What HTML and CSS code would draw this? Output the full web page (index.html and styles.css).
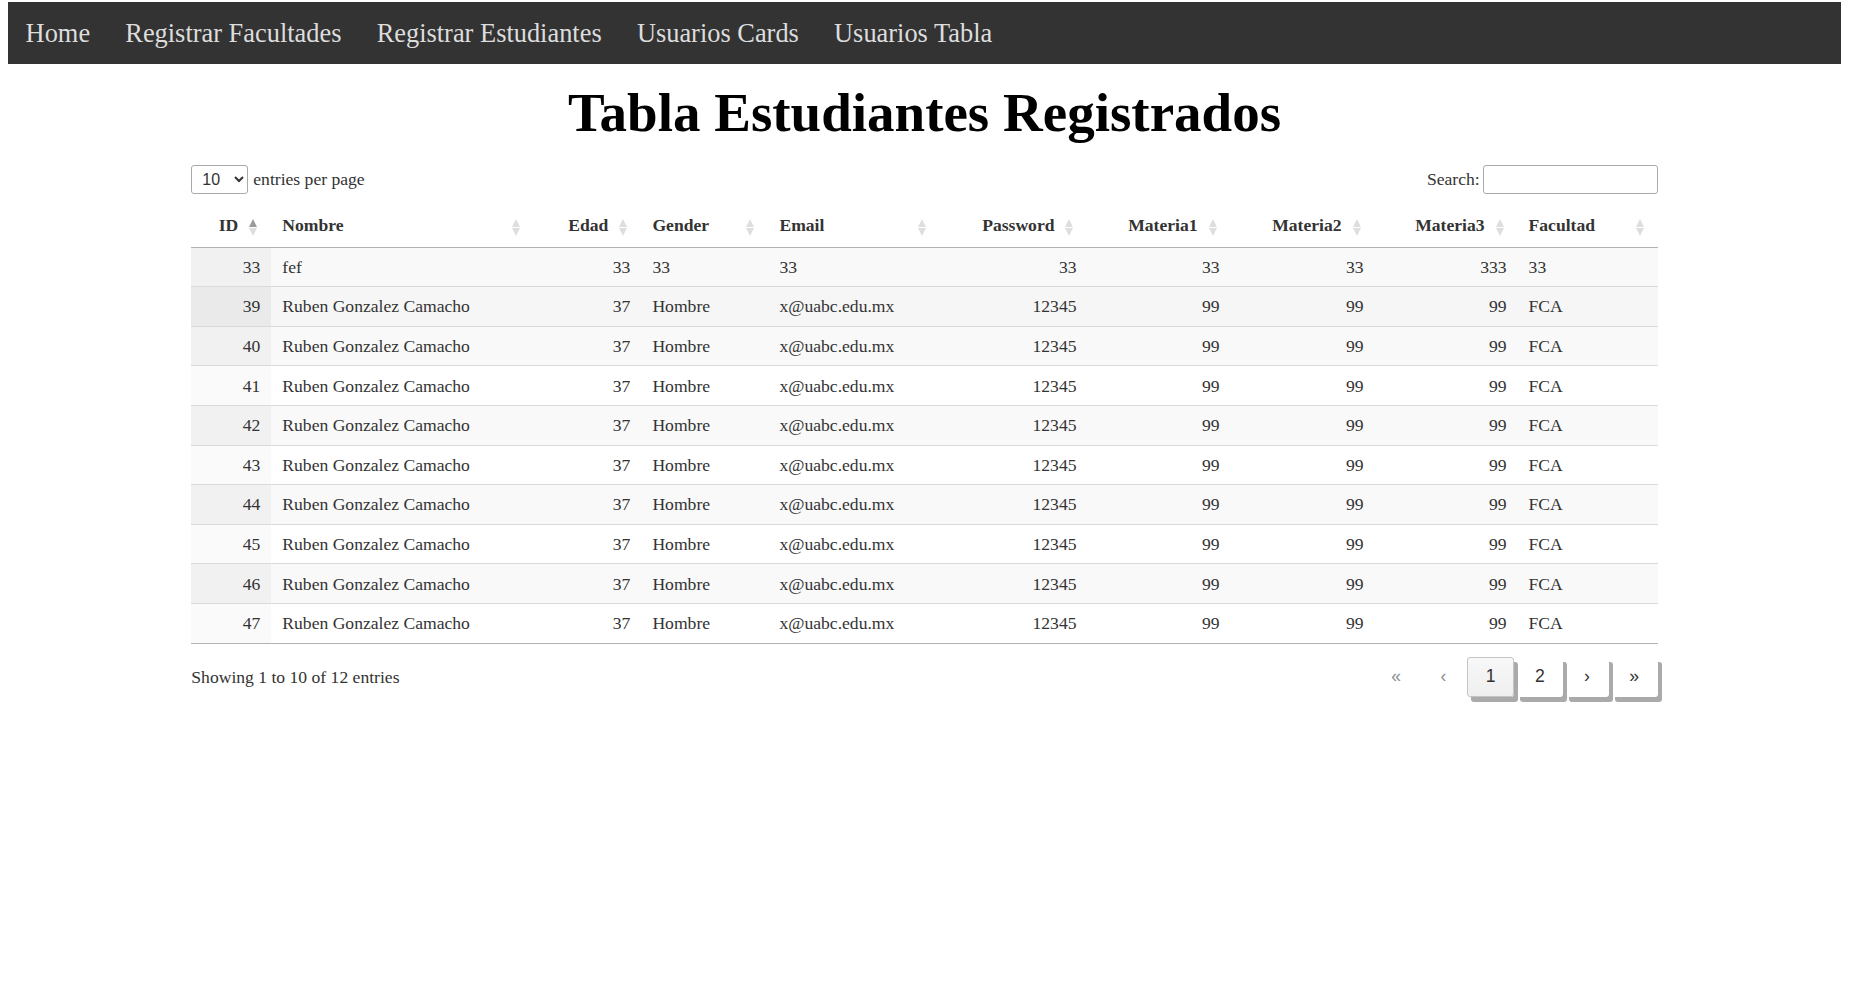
FILE: index.html
```html
<!DOCTYPE html>
<html lang="es">
<head>
<meta charset="utf-8">
<title>Tabla Estudiantes Registrados</title>
<link rel="stylesheet" href="styles.css">
</head>
<body>
<nav class="topnav">
  <a href="#">Home</a>
  <a href="#">Registrar Facultades</a>
  <a href="#">Registrar Estudiantes</a>
  <a href="#">Usuarios Cards</a>
  <a href="#">Usuarios Tabla</a>
</nav>

<h1 class="title">Tabla Estudiantes Registrados</h1>

<div class="dt-container">
  <div class="dt-top">
    <div class="dt-length">
      <select class="dt-select"><option>10</option><option>25</option><option>50</option></select>
      <label class="dt-label">entries per page</label>
    </div>
    <div class="dt-search">
      <label class="dt-label">Search:</label>
      <input type="search" class="dt-input">
    </div>
  </div>

  <table class="dt-table">
    <colgroup>
      <col class="c-id"><col class="c-nombre"><col class="c-edad"><col class="c-gender"><col class="c-email">
      <col class="c-pass"><col class="c-m1"><col class="c-m2"><col class="c-m3"><col class="c-fac">
    </colgroup>
    <thead>
      <tr>
        <th class="num">ID<span class="sort asc"></span></th>
        <th>Nombre<span class="sort"></span></th>
        <th class="num">Edad<span class="sort"></span></th>
        <th>Gender<span class="sort"></span></th>
        <th>Email<span class="sort"></span></th>
        <th class="num">Password<span class="sort"></span></th>
        <th class="num">Materia1<span class="sort"></span></th>
        <th class="num">Materia2<span class="sort"></span></th>
        <th class="num">Materia3<span class="sort"></span></th>
        <th>Facultad<span class="sort"></span></th>
      </tr>
    </thead>
    <tbody>
      <tr><td class="num sorted">33</td><td>fef</td><td class="num">33</td><td>33</td><td>33</td><td class="num">33</td><td class="num">33</td><td class="num">33</td><td class="num">333</td><td>33</td></tr>
      <tr class="hover"><td class="num sorted">39</td><td>Ruben Gonzalez Camacho</td><td class="num">37</td><td>Hombre</td><td>x@uabc.edu.mx</td><td class="num">12345</td><td class="num">99</td><td class="num">99</td><td class="num">99</td><td>FCA</td></tr>
      <tr><td class="num sorted">40</td><td>Ruben Gonzalez Camacho</td><td class="num">37</td><td>Hombre</td><td>x@uabc.edu.mx</td><td class="num">12345</td><td class="num">99</td><td class="num">99</td><td class="num">99</td><td>FCA</td></tr>
      <tr><td class="num sorted">41</td><td>Ruben Gonzalez Camacho</td><td class="num">37</td><td>Hombre</td><td>x@uabc.edu.mx</td><td class="num">12345</td><td class="num">99</td><td class="num">99</td><td class="num">99</td><td>FCA</td></tr>
      <tr><td class="num sorted">42</td><td>Ruben Gonzalez Camacho</td><td class="num">37</td><td>Hombre</td><td>x@uabc.edu.mx</td><td class="num">12345</td><td class="num">99</td><td class="num">99</td><td class="num">99</td><td>FCA</td></tr>
      <tr><td class="num sorted">43</td><td>Ruben Gonzalez Camacho</td><td class="num">37</td><td>Hombre</td><td>x@uabc.edu.mx</td><td class="num">12345</td><td class="num">99</td><td class="num">99</td><td class="num">99</td><td>FCA</td></tr>
      <tr><td class="num sorted">44</td><td>Ruben Gonzalez Camacho</td><td class="num">37</td><td>Hombre</td><td>x@uabc.edu.mx</td><td class="num">12345</td><td class="num">99</td><td class="num">99</td><td class="num">99</td><td>FCA</td></tr>
      <tr><td class="num sorted">45</td><td>Ruben Gonzalez Camacho</td><td class="num">37</td><td>Hombre</td><td>x@uabc.edu.mx</td><td class="num">12345</td><td class="num">99</td><td class="num">99</td><td class="num">99</td><td>FCA</td></tr>
      <tr><td class="num sorted">46</td><td>Ruben Gonzalez Camacho</td><td class="num">37</td><td>Hombre</td><td>x@uabc.edu.mx</td><td class="num">12345</td><td class="num">99</td><td class="num">99</td><td class="num">99</td><td>FCA</td></tr>
      <tr><td class="num sorted">47</td><td>Ruben Gonzalez Camacho</td><td class="num">37</td><td>Hombre</td><td>x@uabc.edu.mx</td><td class="num">12345</td><td class="num">99</td><td class="num">99</td><td class="num">99</td><td>FCA</td></tr>
    </tbody>
  </table>

  <div class="dt-bottom">
    <div class="dt-info">Showing 1 to 10 of 12 entries</div>
    <nav class="dt-paging">
      <a class="pg disabled" href="#">«</a>
      <a class="pg disabled" href="#">‹</a>
      <a class="pg current" href="#">1</a>
      <a class="pg" href="#">2</a>
      <a class="pg" href="#">›</a>
      <a class="pg" href="#">»</a>
    </nav>
  </div>
</div>
</body>
</html>
```

FILE: styles.css
```css
html, body {
  background: #fff;
}

body {
  margin: 2px 8px 8px;
  font-family: "Liberation Serif", "Times New Roman", serif;
  font-size: 17.6px;
  color: #333;
}

/* ---------- top navigation ---------- */
.topnav {
  display: flex;
  background: #333;
}

.topnav a {
  display: block;
  padding: 15.6px 17.6px;
  color: #ddd;
  text-decoration: none;
  font-size: 26.4px;
  line-height: 1.15;
}

/* ---------- title ---------- */
.title {
  margin: 17.5px 0 20.5px;
  text-align: center;
  font-size: 55px;
  line-height: 1.15;
  font-weight: bold;
  color: #000;
}

/* ---------- datatable container ---------- */
.dt-container {
  width: 80%;
  margin: 0 auto;
}

.dt-top {
  display: flex;
  justify-content: space-between;
  align-items: center;
  height: 29px;
  margin-bottom: 15px;
}

.dt-length,
.dt-search {
  display: flex;
  align-items: center;
}

.dt-label {
  line-height: 20px;
}

.dt-select {
  box-sizing: border-box;
  width: 57px;
  height: 29px;
  margin: 0 5px 0 0;
  padding: 0 4px 0 6px;
  border: 1px solid #aaa;
  border-radius: 3px;
  background: transparent;
  color: #333;
  font-family: "Liberation Sans", Arial, sans-serif;
  font-size: 16px;
}

.dt-input {
  box-sizing: border-box;
  width: 175px;
  height: 29px;
  margin: 0 0 0 3px;
  padding: 4px;
  border: 1px solid #aaa;
  border-radius: 3px;
  background: transparent;
  font-family: "Liberation Sans", Arial, sans-serif;
  font-size: 16px;
}

/* ---------- table ---------- */
.dt-table {
  width: 100%;
  table-layout: fixed;
  border-collapse: separate;
  border-spacing: 0;
}

.c-id { width: 80px; }
.c-nombre { width: 263px; }
.c-edad { width: 107px; }
.c-gender { width: 127px; }
.c-email { width: 172px; }
.c-pass { width: 147px; }
.c-m1 { width: 143px; }
.c-m2 { width: 144px; }
.c-m3 { width: 143px; }
.c-fac { width: 140px; }

.dt-table th {
  position: relative;
  padding: 6.6px 33px 11px 11px;
  line-height: 20.2px;
  text-align: left;
  font-weight: bold;
  color: #333;
  border-bottom: 1px solid #b3b3b3;
  vertical-align: bottom;
  white-space: nowrap;
}

.dt-table th.num {
  text-align: right;
}

.sort {
  position: absolute;
  right: 13px;
  top: -1px;
  bottom: 0;
  width: 9px;
}

.sort::before,
.sort::after {
  content: "";
  position: absolute;
  left: 0;
  width: 0;
  height: 0;
  border-left: 4.5px solid transparent;
  border-right: 4.5px solid transparent;
}

.sort::before {
  bottom: 50%;
  margin-bottom: 0.5px;
  border-bottom: 8px solid #dedede;
}

.sort::after {
  top: 50%;
  margin-top: 0.5px;
  border-top: 8px solid #dedede;
}

.sort.asc::before {
  border-bottom-color: #9a9a9a;
}

.dt-table td {
  padding: 9.3px 11px;
  line-height: 20px;
  border-bottom: 1px solid #dadada;
  background: #fff;
  white-space: nowrap;
}

.dt-table td.num {
  text-align: right;
}

.dt-table td.sorted {
  background: #fafafa;
}

.dt-table tbody tr:nth-child(odd) td {
  background: #f9f9f9;
}

.dt-table tbody tr:nth-child(odd) td.sorted {
  background: #f1f1f1;
}

.dt-table tbody tr.hover td {
  background: #f6f6f6;
}

.dt-table tbody tr.hover td.sorted {
  background: #eaeaea;
}

.dt-table tbody tr:last-child td {
  border-bottom-color: #b3b3b3;
}

/* ---------- bottom: info + paging ---------- */
.dt-bottom {
  display: flex;
  justify-content: space-between;
  align-items: center;
  margin-top: 13px;
  padding-bottom: 10px;
}

.dt-info {
  line-height: 20px;
}

.dt-paging {
  display: flex;
  align-items: flex-start;
}

.pg {
  display: block;
  box-sizing: border-box;
  min-width: 26.4px;
  height: 40px;
  margin-left: 2.2px;
  padding: 8.8px 17.6px;
  border: 1px solid transparent;
  border-radius: 3px;
  color: #333;
  font-family: "Liberation Sans", Arial, sans-serif;
  font-size: 17.6px;
  line-height: 20.2px;
  text-align: center;
  text-decoration: none;
  box-shadow: 4px 5px 0 #aaaaaa;
}

.pg.disabled {
  box-shadow: none;
  color: #8a8f96;
  cursor: default;
}

.pg.current {
  position: relative;
  border-color: #c4c4c4;
  background: linear-gradient(#f8f8f8, #efefef);
}
```
